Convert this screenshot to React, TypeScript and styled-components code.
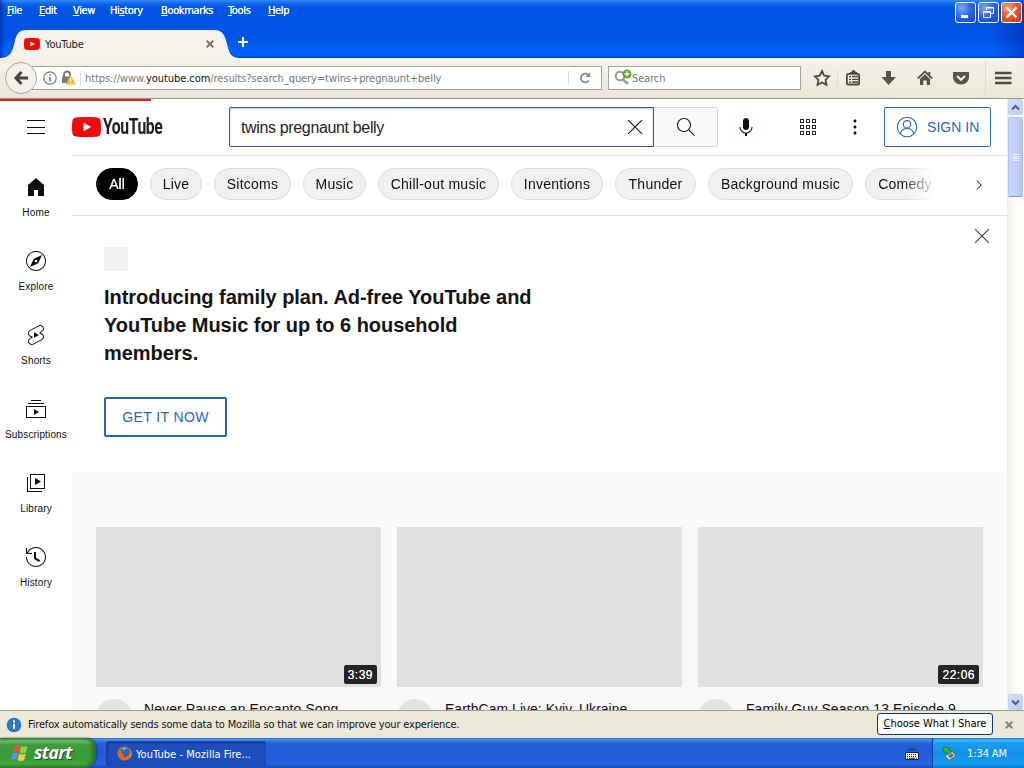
import React from "react";
import styled, { createGlobalStyle, css } from "styled-components";

const GlobalStyle = createGlobalStyle`
  html, body { margin: 0; padding: 0; overflow: hidden; background: #fff; }
  *, *::before, *::after { box-sizing: border-box; }
  button { font: inherit; padding: 0; margin: 0; background: none; border: 0; }
`;

const tahoma = css`
  font-family: "DejaVu Sans Condensed", "DejaVu Sans", sans-serif;
  font-stretch: condensed;
  font-size: 11px;
`;

/* ---------- Desktop and window chrome ---------- */

const Desktop = styled.div`
  width: 1024px;
  height: 768px;
  display: flex;
  flex-direction: column;
  overflow: hidden;
  font-family: "Liberation Sans", Arial, sans-serif;
  color: #0f0f0f;
`;

const TitleBar = styled.header`
  height: 58px;
  flex: none;
  display: flex;
  flex-direction: column;
  background: linear-gradient(90deg, rgba(0, 20, 140, 0.5) 0, transparent 5px, transparent 990px, rgba(0, 30, 170, 0.45) 1024px),
    linear-gradient(#2f8cf8 0, #0f63ec 4px, #0054e3 9px, #0054e3 38px, #0062fb 50px, #0063ff 56px, #0040c0 57px);
`;

const MenuRow = styled.div`
  ${tahoma}
  height: 28px;
  display: flex;
  justify-content: space-between;
  color: #fff;
`;

const Menus = styled.nav`
  display: flex;
  padding-top: 4px;
  padding-left: 7px;
`;

const MenuItem = styled.span<{ $w: number }>`
  width: ${(p) => p.$w}px;
  line-height: 14px;
  white-space: nowrap;
  letter-spacing: -0.35px;
  text-shadow: 0 0 0.5px #fff;
  u { text-underline-offset: 1px; }
`;

const WindowButtons = styled.div`
  display: flex;
  gap: 2px;
  padding: 2px 2px 0 0;
`;

const WindowButton = styled.button<{ $close?: boolean }>`
  width: 21px;
  height: 21px;
  border: 1px solid #fff;
  border-radius: 3px;
  display: grid;
  place-items: center;
  background: ${(p) =>
    p.$close
      ? "radial-gradient(circle at 30% 25%, #f0a083, #df5630 50%, #c03a12)"
      : "radial-gradient(circle at 30% 25%, #7fa5f7, #2a62e6 50%, #1146cf)"};
`;

const TabRow = styled.div`
  height: 30px;
  display: flex;
`;

const TabShape = styled.div`
  width: 240px;
  height: 30px;
  position: relative;
  flex: none;
`;

const TabBackdrop = styled.svg`
  position: absolute;
  inset: 0;
`;

const TabContent = styled.div`
  ${tahoma}
  position: relative;
  height: 30px;
  display: flex;
  align-items: center;
  padding: 2px 26px 0 24px;
`;

const TabTitle = styled.span`
  margin-left: 5px;
  flex: 1;
  color: #222;
  letter-spacing: -0.2px;
`;

const NewTab = styled.div`
  margin: 8px 0 0 -3px;
  height: 12px;
`;

const Toolbar = styled.div`
  height: 41px;
  flex: none;
  display: flex;
  align-items: center;
  border-bottom: 1px solid #9c998c;
  background: linear-gradient(#f4f1ea, #efece2 60%, #eae6d8);
  padding-left: 5px;
`;

const BackButton = styled.button`
  width: 32px;
  height: 32px;
  flex: none;
  border: 1px solid #a9a69c;
  border-radius: 50%;
  display: grid;
  place-items: center;
  background: #f3f1e9;
  z-index: 1;
  margin-top: -1px;
`;

const Field = styled.div<{ $w: number }>`
  ${tahoma}
  width: ${(p) => p.$w}px;
  height: 24px;
  margin-top: -1px;
  border: 1px solid #a5a397;
  background: #fff;
  display: flex;
  align-items: center;
  white-space: nowrap;
  color: #777;
`;

const AddressField = styled(Field)`
  margin-left: -5px;
  border-left: 0;
  padding-left: 11px;
`;

const SearchField = styled(Field)`
  margin-left: 6px;
  padding-left: 5px;
`;

const FieldDivider = styled.i<{ $h?: number }>`
  width: 1px;
  height: ${(p) => p.$h ?? 14}px;
  background: #dcdad2;
`;

const FieldText = styled.span`
  padding-top: 2px;
  letter-spacing: -0.1px;
`;

const Url = styled(FieldText)`
  flex: 1;
  margin-left: 4px;
  letter-spacing: -0.07px;
  b { font-weight: normal; color: #111; }
`;

const ToolIcons = styled.div`
  display: flex;
  align-items: center;
  flex: 1;
  margin-left: 12px;
  margin-top: -1px;
`;

const ToolSlot = styled.span<{ $w: number }>`
  width: ${(p) => p.$w}px;
  height: 20px;
  display: grid;
  place-items: center start;
`;

/* ---------- Page ---------- */

const Viewport = styled.div`
  height: 611px;
  flex: none;
  display: flex;
  background: #fff;
`;

const Page = styled.div`
  width: 1007px;
  height: 611px;
  overflow: hidden;
  position: relative;
`;

const LoadBar = styled.div`
  position: absolute;
  top: 0;
  left: 0;
  width: 151px;
  height: 2px;
  background: #d8201c;
`;

const Masthead = styled.div`
  height: 56px;
  display: flex;
  align-items: center;
`;

const MenuButton = styled.button`
  width: 24px;
  height: 24px;
  margin-left: 24px;
`;

const Logo = styled.div`
  width: 157px;
  margin-left: 24px;
  display: flex;
  align-items: center;
  svg { flex: none; }
`;

const LogoWord = styled.span`
  font: bold 22px/22px Roboto, sans-serif;
  letter-spacing: -0.6px;
  color: #212121;
  transform: scaleX(0.715);
  transform-origin: left;
  margin-left: 2px;
`;

const SearchInput = styled.div`
  width: 425px;
  height: 40px;
  border: 1px solid #35509f;
  box-shadow: inset 0 1px 2px rgba(40, 60, 150, 0.25);
  border-radius: 2px 0 0 2px;
  display: flex;
  align-items: center;
  justify-content: space-between;
  padding: 0 6px 0 11px;
  font-size: 16px;
  color: #222;
`;

const Query = styled.span`
  letter-spacing: -0.35px;
  padding-top: 2px;
`;

const SearchButton = styled.button`
  width: 64px;
  height: 40px;
  border: 1px solid #d3d3d8;
  border-left: 0;
  background: #f8f8f8;
  border-radius: 0 2px 2px 0;
  display: grid;
  place-items: center;
`;

const MicButton = styled.button`
  width: 40px;
  height: 40px;
  margin-left: 8px;
  border-radius: 50%;
  background: #fdfdfd;
  display: grid;
  place-items: center;
`;

const HeaderIcon = styled.button<{ $ml: number }>`
  width: 24px;
  height: 24px;
  margin-left: ${(p) => p.$ml}px;
`;

const SignIn = styled.button`
  width: 107px;
  height: 40px;
  margin-left: 17px;
  border: 1px solid #2a64b0;
  border-radius: 2px;
  display: flex;
  align-items: center;
  padding-left: 10px;
  gap: 8px;
  color: #2a67b8;
  font-size: 14px;
  letter-spacing: 0.05px;
  white-space: nowrap;
`;

const Body = styled.div`
  display: flex;
`;

const MiniGuide = styled.nav`
  width: 72px;
  flex: none;
  padding-top: 4px;
`;

const GuideItem = styled.div`
  height: 74px;
  padding-top: 16px;
  display: flex;
  flex-direction: column;
  align-items: center;
  gap: 7px;
`;

const GuideLabel = styled.span`
  font-size: 10px;
  line-height: 14px;
  white-space: nowrap;
  letter-spacing: 0.15px;
`;

const Main = styled.main`
  width: 935px;
`;

const ChipBar = styled.div`
  height: 61px;
  border-top: 1px solid #e2e2e2;
  border-bottom: 1px solid #e2e2e2;
  display: flex;
  align-items: flex-start;
  padding: 12px 0 0 24px;
`;

const ChipScroller = styled.div`
  width: 841px;
  display: flex;
  gap: 12px;
  overflow: hidden;
  mask-image: linear-gradient(90deg, #000 806px, transparent 840px);
`;

const Chip = styled.button<{ $w: number; $active?: boolean }>`
  width: ${(p) => p.$w}px;
  height: 32px;
  flex: none;
  border-radius: 16px;
  border: 1px solid ${(p) => (p.$active ? "#030303" : "#dcdcdc")};
  background: ${(p) => (p.$active ? "#030303" : "#f1f1f1")};
  color: ${(p) => (p.$active ? "#fff" : "#0f0f0f")};
  font-size: 14px;
  letter-spacing: ${(p) => (p.$active ? 0 : 0.25)}px;
  text-shadow: ${(p) => (p.$active ? "0 0 0.6px #fff" : "none")};
  white-space: nowrap;
`;

const NextChips = styled.button`
  width: 24px;
  height: 24px;
  margin: 5px 0 0 30px;
  display: grid;
  place-items: center;
`;

const Promo = styled.section`
  height: 256px;
  padding: 31px 13px 0 32px;
  display: flex;
  justify-content: space-between;
  align-items: flex-start;
`;

const PromoImage = styled.div`
  width: 24px;
  height: 24px;
  background: #f0f0f0;
`;

const PromoTitle = styled.h2`
  margin: 12px 0 30px;
  width: 460px;
  font-size: 20px;
  line-height: 28px;
  font-weight: bold;
  color: #131313;
  white-space: nowrap;
  letter-spacing: -0.04px;
`;

const PromoButton = styled.button`
  width: 123px;
  height: 40px;
  border: 2px solid #2a62ac;
  border-radius: 2px;
  color: #2a67b8;
  font-size: 14px;
  letter-spacing: 0.4px;
`;

const PromoClose = styled.button`
  width: 24px;
  height: 24px;
  margin-top: -23px;
`;

const Grid = styled.section`
  height: 300px;
  background: #f9f9f9;
  padding: 55px 24px 0;
  display: flex;
  gap: 16px;
`;

const Card = styled.article`
  width: 285px;
`;

const Thumb = styled.div`
  height: 160px;
  background: #e1e1e1;
  display: flex;
  align-items: flex-end;
  justify-content: flex-end;
  padding: 0 4px 3px 0;
`;

const Duration = styled.span`
  height: 19px;
  padding: 0 4px;
  border-radius: 2px;
  background: #242424;
  color: #fff;
  font: 500 12px/20px "Liberation Sans", sans-serif;
  letter-spacing: 0.5px;
  text-shadow: 0 0 0.6px #fff;
`;

const CardMeta = styled.div`
  display: flex;
  gap: 12px;
  padding-top: 12px;
`;

const Avatar = styled.div`
  width: 36px;
  height: 36px;
  border-radius: 50%;
  background: #e3e3e3;
`;

const CardTitle = styled.h3<{ $ls: number }>`
  margin: 0;
  font-size: 14px;
  line-height: 20px;
  font-weight: normal;
  white-space: nowrap;
  letter-spacing: ${(p) => p.$ls}px;
`;

/* ---------- Scrollbar ---------- */

const Scrollbar = styled.div`
  width: 17px;
  height: 611px;
  display: flex;
  flex-direction: column;
  justify-content: space-between;
  background: linear-gradient(90deg, #efeee8, #fbfbf7 50%, #fefefb);
  padding: 0 0 0 1px;
`;

const ScrollButton = styled.div`
  width: 15px;
  height: 16px;
  border: 1px solid #c4d2f6;
  border-radius: 2px;
  background: linear-gradient(135deg, #d5e0fe, #bacbf9);
  display: grid;
  place-items: center;
`;

const ScrollThumb = styled.div`
  width: 15px;
  height: 80px;
  margin-top: 2px;
  border: 1px solid #b3c4f2;
  border-bottom-color: #7f99cf;
  border-radius: 2px;
  background: linear-gradient(90deg, #cad8fd, #bfcffb 60%, #b4c5f8);
  display: flex;
  flex-direction: column;
  align-items: center;
  justify-content: center;
  gap: 1px;
`;

const Grip = styled.i`
  width: 6px;
  height: 1px;
  background: #eef4fe;
`;

/* ---------- Notification bar and taskbar ---------- */

const Notice = styled.div`
  ${tahoma}
  height: 28px;
  flex: none;
  display: flex;
  align-items: center;
  background: #ece9d9;
  border-top: 1px solid #a19e92;
  padding: 0 11px 0 6px;
  color: #111;
`;

const NoticeText = styled.span`
  flex: 1;
  margin-left: 6px;
  white-space: nowrap;
  letter-spacing: -0.18px;
`;

const NoticeButton = styled.button`
  width: 116px;
  height: 22px;
  border: 1px solid #12386b;
  border-radius: 3px;
  background: #fbfbf9;
  white-space: nowrap;
  letter-spacing: -0.03px;
  margin: -2px 12px 0 0;
  u { text-underline-offset: 1px; }
`;

const Taskbar = styled.footer`
  ${tahoma}
  height: 30px;
  flex: none;
  display: flex;
  background: linear-gradient(#1f4fb8 0, #4a93f0 1px, #3c83ea 3px, #2560d8 5px, #225bd6 15px, #2562df 26px, #1c48b0 30px);
  color: #fff;
`;

const StartButton = styled.button`
  width: 96px;
  height: 30px;
  border-radius: 0 10px 12px 0;
  background: linear-gradient(#2c7a2b 0, #6fba6c 3px, #3f9a3d 7px, #3a9a38 20px, #3fa63c 26px, #2b7a29 30px);
  box-shadow: inset -5px 0 5px -2px #246d22, 1px 0 2px #173f94;
  display: flex;
  align-items: center;
  padding-left: 11px;
  gap: 5px;
`;

const StartLabel = styled.span`
  font: italic bold 17.5px/22px "Open Sans", sans-serif;
  letter-spacing: -0.5px;
  color: #fff;
  margin-top: -3px;
  text-shadow: 1px 1px 1px #1c4d1b;
`;

const TaskItem = styled.div`
  width: 160px;
  height: 25px;
  margin: 3px 0 0 10px;
  border-radius: 2px;
  border: 1px solid #1a45a5;
  background: #1d4fbc;
  box-shadow: inset 1px 1px 2px #143a8e;
  display: flex;
  align-items: center;
  gap: 4px;
  padding-left: 10px;
  white-space: nowrap;
  letter-spacing: 0.04px;
`;

const TaskText = styled.span`
  padding-top: 1px;
`;

const Spacer = styled.div`
  flex: 1;
`;

const LangIcon = styled.div`
  width: 27px;
  padding-top: 9px;
`;

const Tray = styled.div`
  width: 92px;
  border-left: 1px solid #123f9a;
  background: linear-gradient(#1b6fd0 0, #3fb5f8 2px, #189ff0 5px, #1190ea 15px, #149bf0 26px, #0f76c8 30px);
  display: flex;
  align-items: center;
  padding-left: 9px;
  gap: 10px;
  white-space: nowrap;
  letter-spacing: -0.1px;
`;

/* ---------- Icons ---------- */

const BlockSvg = styled.svg`
  display: block;
`;

const Glyph = ({ d, size = 24, fill = "#0f0f0f" }: { d: string; size?: number; fill?: string }) => (
  <BlockSvg width={size} height={size} viewBox="0 0 24 24" fill={fill}>
    <path d={d} />
  </BlockSvg>
);

const paths = {
  menu: "M21 6H3V5h18v1zm0 6H3v1h18v-1zm0 6H3v1h18v-1z",
  search:
    "M20.87 20.17l-5.59-5.59C16.35 13.35 17 11.75 17 10c0-3.87-3.13-7-7-7s-7 3.13-7 7 3.13 7 7 7c1.75 0 3.35-.65 4.58-1.71l5.59 5.59.7-.71zM10 16c-3.31 0-6-2.69-6-6s2.69-6 6-6 6 2.69 6 6-2.69 6-6 6z",
  mic: "M12 3c-1.66 0-3 1.37-3 3.07v5.86c0 1.7 1.34 3.07 3 3.07s3-1.37 3-3.07V6.07C15 4.37 13.66 3 12 3zM18.5 12h-1c0 3.03-2.47 5.5-5.5 5.5S6.5 15.03 6.5 12h-1c0 3.24 2.39 5.93 5.5 6.41V21h2v-2.59c3.11-.48 5.5-3.17 5.5-6.41z",
  close: "M12.7 12l6.6 6.6-.7.7-6.6-6.6-6.6 6.6-.7-.7 6.6-6.6-6.6-6.6.7-.7 6.6 6.6 6.6-6.6.7.7z",
  more: "M12 16.5c.83 0 1.5.67 1.5 1.5s-.67 1.5-1.5 1.5-1.5-.67-1.5-1.5.67-1.5 1.5-1.5zM10.5 12c0 .83.67 1.5 1.5 1.5s1.5-.67 1.5-1.5-.67-1.5-1.5-1.5-1.5.67-1.5 1.5zm0-6c0 .83.67 1.5 1.5 1.5s1.5-.67 1.5-1.5-.67-1.5-1.5-1.5-1.5.67-1.5 1.5z",
  next: "M9.4 18.4l-.7-.7 5.6-5.6-5.7-5.7.7-.7 6.4 6.4-6.3 6.3z",
  home: "M4 10v11h6v-6h4v6h6V10l-8-7z",
  explore:
    "M9.8 9.8l-3.83 8.23 8.23-3.83 3.83-8.23L9.8 9.8zm3.28 2.97c-.21.29-.51.48-.86.54-.07.01-.15.02-.22.02-.28 0-.54-.08-.77-.25-.29-.21-.48-.51-.54-.86s.02-.71.23-1 .51-.48.86-.54c.35-.06.7.02.99.23.29.21.48.51.54.86.06.35-.02.71-.23 1zM12 3c4.96 0 9 4.04 9 9s-4.04 9-9 9-9-4.04-9-9 4.04-9 9-9m0-1C6.48 2 2 6.48 2 12s4.48 10 10 10 10-4.48 10-10S17.52 2 12 2z",
  shorts:
    "M10 14.65v-5.3L15 12l-5 2.65zm7.77-4.33c-.77-.32-1.2-.5-1.2-.5L18 9.06c1.84-.96 2.53-3.23 1.56-5.06s-3.24-2.53-5.07-1.56L6 6.94c-1.29.68-2.07 2.04-2 3.49.07 1.42.93 2.67 2.22 3.25.03.01 1.2.5 1.2.5L6 14.93c-1.83.97-2.53 3.24-1.56 5.07.97 1.83 3.24 2.53 5.07 1.56l8.5-4.5c1.29-.68 2.06-2.04 1.99-3.49-.07-1.42-.94-2.68-2.23-3.25zm-.23 5.86l-8.5 4.5c-1.34.71-3.01.2-3.72-1.14-.71-1.34-.2-3.01 1.14-3.72l2.04-1.08v-1.21l-.69-.28-1.11-.46c-.99-.41-1.65-1.35-1.7-2.41-.05-1.06.52-2.06 1.46-2.56l8.5-4.5c1.34-.71 3.01-.2 3.72 1.14.71 1.34.2 3.01-1.14 3.72L15.5 9.26v1.21l1.8.74c.99.41 1.65 1.35 1.7 2.41.05 1.06-.52 2.06-1.46 2.56z",
  subscriptions: "M10 18v-6l5 3-5 3zm7-15H7v1h10V3zm3 3H4v1h16V6zm2 3H2v12h20V9zM3 10h18v10H3V10z",
  library: "M11 7l6 3.5L11 14V7zm7 13H4V6H3v15h15v-1zm3-2H6V3h15v15zM7 17h13V4H7v13z",
  history:
    "M14.97 16.95L10 13.87V7h2v5.76l4.03 2.49-1.06 1.7zM22 12c0 5.51-4.49 10-10 10S2 17.51 2 12h1c0 4.96 4.04 9 9 9s9-4.04 9-9-4.04-9-9-9C8.81 3 5.92 4.64 4.28 7.38c-.11.18-.22.37-.31.56L3.94 8H8v1H1.96V3h1v4.74c.04-.09.07-.17.11-.25.11-.22.23-.42.35-.63C5.22 3.86 8.51 2 12 2c5.51 0 10 4.49 10 10z",
};

const PlayBadge = ({ w, h }: { w: number; h: number }) => (
  <svg width={w} height={h} viewBox="0 0 28 20" preserveAspectRatio="none">
    <path
      fill="#f00b0b"
      d="M27.4 3.1A3.5 3.5 0 0 0 24.9.6C22.7 0 14 0 14 0S5.300 0 3.100.6A3.500 3.500 0 0 0 .6 3.100C0 5.300 0 10 0 10s0 4.700.6 6.900a3.500 3.500 0 0 0 2.500 2.500C5.300 20 14 20 14 20s8.700 0 10.900-.6a3.500 3.500 0 0 0 2.500-2.500C28 14.700 28 10 28 10s0-4.700-.6-6.900z"
    />
    <path fill="#fff" d="M11.2 14.2V5.8L18.5 10z" />
  </svg>
);

const AppsIcon = () => (
  <BlockSvg width="24" height="24" viewBox="0 0 24 24" fill="none" stroke="#2c2c2c">
    {[4.5, 10.5, 16.5].map((y) =>
      [5.5, 11.5, 17.5].map((x) => <rect key={`${x}-${y}`} x={x} y={y} width="3" height="3" />)
    )}
  </BlockSvg>
);

const SmallCross = ({ color }: { color: string }) => (
  <svg width="8" height="8" viewBox="0 0 8 8" stroke={color} strokeWidth="2">
    <path d="M.7.7l6.600 6.600M7.300.7L.7 7.300" />
  </svg>
);

const Firefox = () => (
  <svg width="15" height="15" viewBox="0 0 16 16">
    <circle cx="8" cy="8" r="7.500" fill="#e8701c" />
    <circle cx="8.300" cy="6.500" r="5.300" fill="#2f62b5" />
    <path d="M5 2.500c2-1.500 5-1 6 .5-2 0-3 1-4 2z" fill="#6fb1e6" />
    <path d="M1 5c0 6 3 9 7.500 9.500 4 0 6.500-3 6.500-7-.6 2.600-2.700 4.400-5.500 4.200C7 11.500 5.800 9.800 7 8.500 5 8.700 4.500 7 5.500 5.800 4 5.500 3.500 4 3.500 2.500 2 3 1.300 4 1 5z" fill="#e8641c" />
    <path d="M14.500 4.500c1.200 3.500.5 6.500-2 8.500 2.500-.7 3.300-3 3-5.500z" fill="#fbc53a" />
  </svg>
);

const WindowsFlag = () => (
  <svg width="18" height="18" viewBox="0 0 18 18">
    <path d="M4 1.500C6 .3 7.700.5 9 1.400L7.500 8C6 7.100 4 7 2 8z" fill="#e8592b" />
    <path d="M10 1.800c2 1.200 4 1.200 6.500.2L15 8.600c-2 1-4.300.9-6.500-.2z" fill="#8fd04a" />
    <path d="M1.700 9.200c2-1.100 4-1 5.500-.1l-1.600 6.600c-1.500-.9-3.500-1-5.500.1z" fill="#5c93f0" />
    <path d="M8.200 9.500c2.100 1.200 4.300 1.200 6.500.2l-1.600 6.500c-2.200 1-4.400 1-6.500-.2z" fill="#f8cf3c" />
  </svg>
);

const IconBox = styled.span<{ $ml?: number; $mr?: number; $mt?: number }>`
  display: block;
  line-height: 0;
  flex: none;
  margin: ${(p) => p.$mt ?? 0}px ${(p) => p.$mr ?? 0}px 0 ${(p) => p.$ml ?? 0}px;
`;

/* ---------- Data ---------- */

const menus: [string, string, string, number][] = [
  ["", "F", "ile", 32], ["", "E", "dit", 34], ["", "V", "iew", 37], ["Hi", "s", "tory", 51],
  ["", "B", "ookmarks", 67], ["", "T", "ools", 40], ["", "H", "elp", 30],
];

const guide: [string, string][] = [
  ["Home", paths.home], ["Explore", paths.explore], ["Shorts", paths.shorts],
  ["Subscriptions", paths.subscriptions], ["Library", paths.library], ["History", paths.history],
];

const chips: [string, number][] = [
  ["All", 42], ["Live", 52], ["Sitcoms", 77], ["Music", 63], ["Chill-out music", 121],
  ["Inventions", 92], ["Thunder", 81], ["Background music", 145], ["Comedy", 80],
];

const videos = [
  { title: "Never Pause an Encanto Song", time: "3:39", ls: 0.08 },
  { title: "EarthCam Live: Kyiv, Ukraine", time: "", ls: 0.02 },
  { title: "Family Guy Season 13 Episode 9", time: "22:06", ls: 0.07 },
];

export default function App() {
  return (
    <Desktop>
      <GlobalStyle />
      <TitleBar>
        <MenuRow>
          <Menus>
            {menus.map(([lead, key, rest, w]) => (
              <MenuItem key={key + rest} $w={w}>{lead}<u>{key}</u>{rest}</MenuItem>
            ))}
          </Menus>
          <WindowButtons>
            <WindowButton aria-label="Minimize">
              <svg width="15" height="15"><path d="M3 10h7v3H3z" fill="#fff" /></svg>
            </WindowButton>
            <WindowButton aria-label="Restore">
              <svg width="15" height="15" fill="none" stroke="#fff">
                <path d="M5.500 5V2.500h7v6H10M5 3h8" /><path d="M2.500 6.500h7v6h-7zM2 7.300h8" />
              </svg>
            </WindowButton>
            <WindowButton $close aria-label="Close">
              <svg width="15" height="15"><path d="M2.500 2.500l10 10M12.500 2.500l-10 10" stroke="#fff" strokeWidth="2.200" /></svg>
            </WindowButton>
          </WindowButtons>
        </MenuRow>
        <TabRow>
          <TabShape>
            <TabBackdrop width="240" height="30">
              <path d="M0 30C9 30 12 25 14 17 16 8 17 2 27 2H214c9 0 11 6 13 14 2 9 4 14 13 14z" fill="#f4f2ea" />
            </TabBackdrop>
            <TabContent>
              <PlayBadge w={16} h={12} />
              <TabTitle>YouTube</TabTitle>
              <SmallCross color="#76746d" />
            </TabContent>
          </TabShape>
          <NewTab>
            <BlockSvg width="12" height="12"><path d="M6 1v10M1 6h10" stroke="#fff" strokeWidth="2.200" /></BlockSvg>
          </NewTab>
        </TabRow>
      </TitleBar>

      <Toolbar>
        <BackButton aria-label="Back">
          <svg width="16" height="16" fill="none" stroke="#45443e" strokeWidth="3"><path d="M8.500 2L3 8l5.500 6M3 8h12" /></svg>
        </BackButton>
        <AddressField $w={570}>
          <IconBox>
            <svg width="14" height="14" fill="none" stroke="#777" strokeWidth="1.200">
              <circle cx="7" cy="7" r="6.200" /><path d="M7 6v4.500M7 3.300v1.500" strokeWidth="1.600" />
            </svg>
          </IconBox>
          <IconBox $ml={4} $mr={3}>
            <svg width="16" height="16">
              <path d="M3 7V4.500a3 3 0 0 1 6 0V7" fill="none" stroke="#777" strokeWidth="1.800" />
              <path d="M1 6.500h9V13H1z" fill="#777" />
              <path d="M9.500 5l5.500 9.500H4.500z" fill="#fbb829" />
              <path d="M9.700 8.500v3M9.700 12.300v1.200" stroke="#fff" strokeWidth="1.200" />
            </svg>
          </IconBox>
          <FieldDivider />
          <Url>https://www.<b>youtube.com</b>/results?search_query=twins+pregnaunt+belly</Url>
          <FieldDivider />
          <IconBox $ml={10} $mr={10}>
            <svg width="12" height="12" fill="none" stroke="#8f8d86" strokeWidth="1.900">
              <path d="M9.800 8.700A4.400 4.400 0 1 1 9.800 3.300" /><path d="M11.200 0v5H6.500z" fill="#8f8d86" stroke="none" />
            </svg>
          </IconBox>
        </AddressField>
        <SearchField $w={193}>
          <IconBox>
            <svg width="18" height="18">
              <circle cx="6" cy="7" r="4.300" fill="none" stroke="#9a9a96" strokeWidth="1.900" />
              <path d="M9 10.500l5 4.500" stroke="#9a9a96" strokeWidth="2.400" />
              <circle cx="13" cy="5" r="4.600" fill="#6aa62c" />
              <path d="M13 2.500v5M10.500 5h5" stroke="#fff" strokeWidth="1.300" />
            </svg>
          </IconBox>
          <FieldText>Search</FieldText>
        </SearchField>
        <ToolIcons>
          <ToolSlot $w={24}>
            <svg width="18" height="18"><path d="M9 2l2.200 4.600 5 .7-3.600 3.500.9 5L9 13.400l-4.500 2.400.9-5L1.800 7.300l5-.7z" fill="none" stroke="#4c4b45" strokeWidth="1.800" /></svg>
          </ToolSlot>
          <FieldDivider $h={16} />
          <ToolSlot $w={36}>
            <IconBox $ml={7}>
              <svg width="16" height="18">
                <path d="M5 4.500V3h1.500a2 2 0 0 1 4 0H12v1.500z" fill="#4c4b45" />
                <rect x="1.900" y="4.900" width="12.200" height="10.600" rx="1.300" fill="none" stroke="#4c4b45" strokeWidth="1.800" />
                <path d="M4 7.500h2M4 10.300h2M4 13h2M7 7.500h6M7 10.300h6M7 13h6" stroke="#4c4b45" strokeWidth="1.300" />
              </svg>
            </IconBox>
          </ToolSlot>
          <ToolSlot $w={35}>
            <IconBox $ml={7} $mt={1}>
              <svg width="16" height="18"><path d="M5 2h5v6h5l-7.500 8L.5 8H5z" fill="#55544e" /></svg>
            </IconBox>
          </ToolSlot>
          <ToolSlot $w={36}>
            <IconBox $ml={8} $mt={1}>
              <svg width="16" height="18">
                <path d="M.8 9.500L8 2.500l7.200 7" fill="none" stroke="#55544e" strokeWidth="1.800" />
                <path d="M3 10L8 5.300 13 10v6H9.700v-4.500H6.300V16H3z" fill="#55544e" />
                <path d="M11.300 3h2v3h-2z" fill="#55544e" />
              </svg>
            </IconBox>
          </ToolSlot>
          <ToolSlot $w={40}>
            <IconBox $ml={7}>
              <svg width="18" height="18">
                <path d="M1 3h16v5.500a8 7 0 0 1-16 0z" fill="#55544e" /><path d="M5 7l4 3.800L13 7" fill="none" stroke="#f3f1e9" strokeWidth="2" />
              </svg>
            </IconBox>
          </ToolSlot>
          <FieldDivider $h={34} />
          <ToolSlot $w={30}>
            <IconBox $ml={9}>
              <svg width="17" height="16"><path d="M0 3h16.500M0 8h16.500M0 13h16.500" stroke="#4c4b45" strokeWidth="2.600" /></svg>
            </IconBox>
          </ToolSlot>
        </ToolIcons>
      </Toolbar>

      <Viewport>
        <Page>
          <LoadBar />
          <Masthead>
            <MenuButton aria-label="Menu"><Glyph d={paths.menu} /></MenuButton>
            <Logo>
              <PlayBadge w={29} h={20} />
              <LogoWord>YouTube</LogoWord>
            </Logo>
            <SearchInput>
              <Query>twins pregnaunt belly</Query>
              <Glyph d={paths.close} />
            </SearchInput>
            <SearchButton aria-label="Search"><Glyph d={paths.search} /></SearchButton>
            <MicButton aria-label="Voice"><Glyph d={paths.mic} /></MicButton>
            <HeaderIcon $ml={29} aria-label="Apps"><AppsIcon /></HeaderIcon>
            <HeaderIcon $ml={24} aria-label="More"><Glyph d={paths.more} /></HeaderIcon>
            <SignIn>
              <svg width="24" height="24" viewBox="0 0 24 24" fill="none" stroke="#2a67b8" strokeWidth="1.100">
                <circle cx="12" cy="12" r="9.700" /><circle cx="12" cy="9.300" r="3.700" />
                <path d="M5.300 18.800C6 15.300 8.500 13.500 12 13.500s6 1.800 6.700 5.300" />
              </svg>
              SIGN IN
            </SignIn>
          </Masthead>
          <Body>
            <MiniGuide>
              {guide.map(([label, d]) => (
                <GuideItem key={label}>
                  <Glyph d={d} />
                  <GuideLabel>{label}</GuideLabel>
                </GuideItem>
              ))}
            </MiniGuide>
            <Main>
              <ChipBar>
                <ChipScroller>
                  {chips.map(([label, w], i) => (
                    <Chip key={label} $w={w} $active={i === 0}>{label}</Chip>
                  ))}
                </ChipScroller>
                <NextChips aria-label="Next"><Glyph d={paths.next} size={18} /></NextChips>
              </ChipBar>
              <Promo>
                <div>
                  <PromoImage />
                  <PromoTitle>
                    Introducing family plan. Ad-free YouTube and<br />
                    YouTube Music for up to 6 household<br />
                    members.
                  </PromoTitle>
                  <PromoButton>GET IT NOW</PromoButton>
                </div>
                <PromoClose aria-label="Dismiss"><Glyph d={paths.close} fill="#3a3a3a" /></PromoClose>
              </Promo>
              <Grid>
                {videos.map((v) => (
                  <Card key={v.title}>
                    <Thumb>{v.time && <Duration>{v.time}</Duration>}</Thumb>
                    <CardMeta>
                      <Avatar />
                      <CardTitle $ls={v.ls}>{v.title}</CardTitle>
                    </CardMeta>
                  </Card>
                ))}
              </Grid>
            </Main>
          </Body>
        </Page>
        <Scrollbar>
          <div>
            <ScrollButton>
              <svg width="9" height="7"><path d="M1 5.500L4.500 2 8 5.500" fill="none" stroke="#4d6185" strokeWidth="2" /></svg>
            </ScrollButton>
            <ScrollThumb><Grip /><Grip /><Grip /><Grip /></ScrollThumb>
          </div>
          <ScrollButton>
            <svg width="9" height="7"><path d="M1 1.500L4.500 5 8 1.500" fill="none" stroke="#4d6185" strokeWidth="2" /></svg>
          </ScrollButton>
        </Scrollbar>
      </Viewport>

      <Notice>
        <svg width="16" height="16">
          <circle cx="8" cy="8" r="7.300" fill="#2b78c8" /><path d="M8 6.800v5M8 3.500v2" stroke="#fff" strokeWidth="2" />
        </svg>
        <NoticeText>Firefox automatically sends some data to Mozilla so that we can improve your experience.</NoticeText>
        <NoticeButton><u>C</u>hoose What I Share</NoticeButton>
        <SmallCross color="#85837b" />
      </Notice>

      <Taskbar>
        <StartButton>
          <WindowsFlag />
          <StartLabel>start</StartLabel>
        </StartButton>
        <TaskItem><Firefox /><TaskText>YouTube - Mozilla Fire...</TaskText></TaskItem>
        <Spacer />
        <LangIcon>
          <svg width="14" height="14">
            <path d="M3 3.500l2-2 2 2 2-2 2 2" fill="none" stroke="#10204a" />
            <path d="M.5 5.500h13v7H.5z" fill="#f4f4f4" stroke="#10204a" />
            <path d="M2 7.500h10M2 9.500h10" stroke="#10204a" strokeDasharray="1 1" />
            <path d="M2 11.300h10" stroke="#10204a" strokeDasharray="1 1 6 1" />
          </svg>
        </LangIcon>
        <Tray>
          <svg width="15" height="15">
            <path d="M3 10l7-5 4 5-7 4.500z" fill="#c9cfd4" stroke="#4a5660" strokeWidth=".8" />
            <path d="M6.500 10l3.500-2.500 1.500 2.300L8.300 12z" fill="#59656f" />
            <path d="M1 1l7 1-1.500 1.800L9.500 6l-3 3L4 5.500 2 7z" fill="#3fb53a" stroke="#17641a" strokeWidth=".6" />
          </svg>
          1:34 AM
        </Tray>
      </Taskbar>
    </Desktop>
  );
}
